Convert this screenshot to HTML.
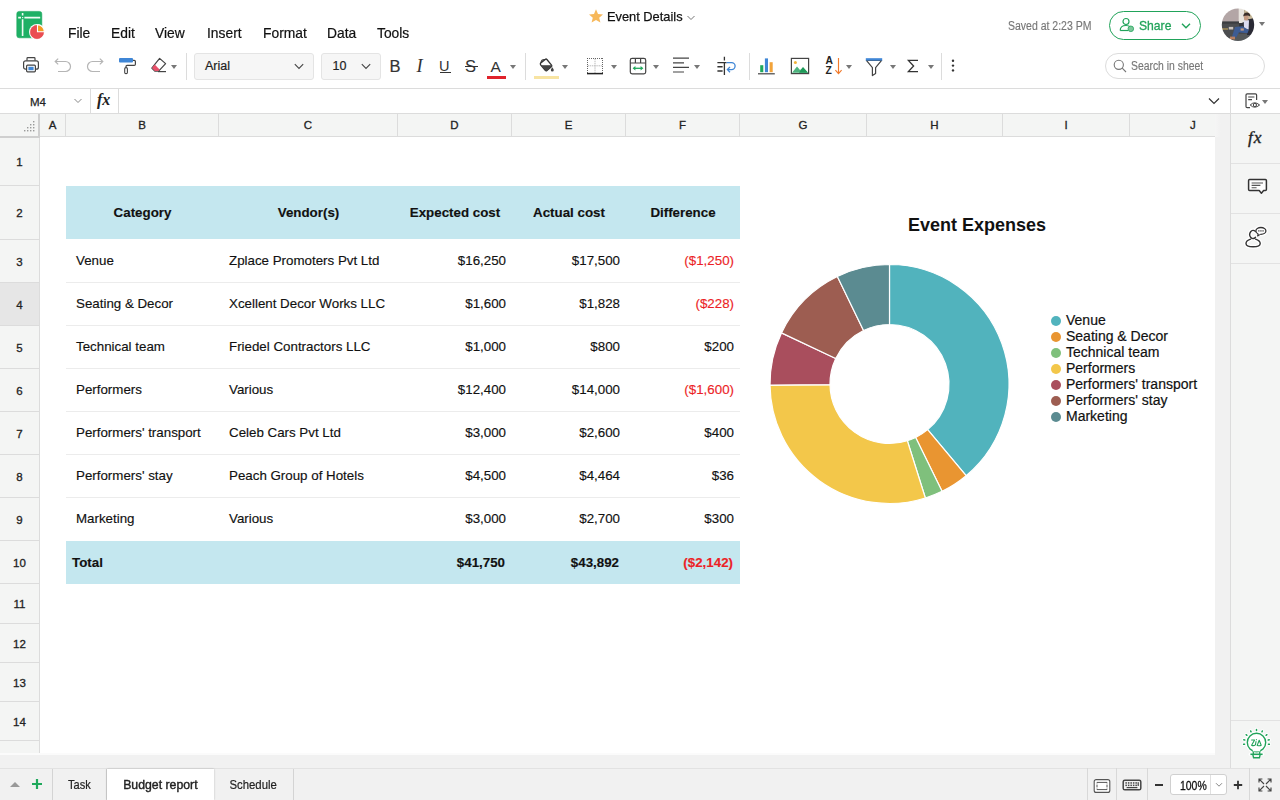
<!DOCTYPE html>
<html><head><meta charset="utf-8"><title>Event Details</title>
<style>
*{box-sizing:border-box;margin:0;padding:0}
html,body{width:1280px;height:800px;overflow:hidden;background:#fff}
body{font-family:"Liberation Sans",sans-serif;color:#222;position:relative;font-size:13px}
.abs{position:absolute}
.menu span{position:absolute;top:24px;font-size:14.2px;color:#111;line-height:18px;white-space:nowrap;transform-origin:0 50%;transform:scaleX(.975);-webkit-text-stroke:0.2px #111}
.ui{font-family:"Liberation Sans",sans-serif}
.sep{position:absolute;width:1px;background:#dcdcdc;top:53px;height:27px}
.box{position:absolute;top:53px;height:27px;background:#f6f6f6;border:1px solid #e4e4e4;border-radius:3px}
.tb{position:absolute;font-size:16px;line-height:20px;color:#333;top:56px}
.arr{position:absolute;width:0;height:0;border-left:3.5px solid transparent;border-right:3.5px solid transparent;border-top:4px solid #777;top:65px}
.colh{position:absolute;top:114px;height:23px;background:#f4f5f4;border-right:1px solid #dcdcdc;border-bottom:1px solid #dcdcdc;font-size:11.5px;font-weight:normal;-webkit-text-stroke:0.3px #222;color:#222;text-align:center;line-height:22px}
.rowh{position:absolute;left:0;width:40px;background:#f4f5f4;border-right:1px solid #dcdcdc;border-bottom:1px solid #dcdcdc;font-size:11.5px;font-weight:normal;-webkit-text-stroke:0.3px #222;color:#222;text-align:center}
.cell{position:absolute;font-size:13.33px;line-height:16px;color:#111;white-space:nowrap;-webkit-text-stroke:0.15px}
.r{text-align:right}
.red{color:#ec1f27}
.b{font-weight:bold}
.hl{position:absolute;left:66px;width:674px;height:1px;background:#ececec}
.leg{position:absolute;left:1066px;font-size:14px;line-height:16px;color:#111;white-space:nowrap;-webkit-text-stroke:0.2px #111}
.dot{position:absolute;left:1051px;width:10px;height:10px;border-radius:50%}
.tab{position:absolute;top:769px;height:31px;font-size:13px;line-height:32px;color:#222;text-align:center;border-right:1px solid #d4d4d4;-webkit-text-stroke:0.2px #222}.tab span{display:inline-block}
</style></head><body>

<!-- ===== TOP BAR ===== -->
<div id="top" class="abs" style="left:0;top:0;width:1280px;height:89px;background:#fff;border-bottom:1px solid #dcdcdc"></div>

<!-- logo -->
<svg class="abs" style="left:14px;top:8px" width="34" height="34" viewBox="0 0 34 34">
  <rect x="2.8" y="3.4" width="25" height="26.4" rx="2.4" fill="#1fb065" stroke="#17a55b" stroke-width="0.6"/>
  <path d="M8.6 5 V7.6 M8.6 11.2 V28" stroke="#f2fbf5" stroke-width="1.6"/>
  <path d="M4.2 9.6 H7 M10.4 9.6 H26.2" stroke="#f2fbf5" stroke-width="1.6"/>
  <rect x="8" y="9" width="1.2" height="1.2" fill="#d8f2e3"/>
  <circle cx="23" cy="24" r="8" fill="#fff"/>
  <circle cx="23" cy="24" r="6.7" fill="#ea4d52" stroke="#e23a40" stroke-width="0.5"/>
  <path d="M23.5 23.7 V16.8 A6.9 6.9 0 0 1 30.4 23.7 Z" fill="#f39c22" stroke="#fff" stroke-width="1.1"/>
</svg>

<div class="menu">
<span style="left:68px">File</span><span style="left:110.7px">Edit</span><span style="left:155px">View</span><span style="left:207px">Insert</span><span style="left:263px">Format</span><span style="left:327px">Data</span><span style="left:377px">Tools</span>
</div>

<!-- title -->
<svg class="abs" style="left:588px;top:8px" width="16" height="16" viewBox="0 0 16 16"><path d="M8 1.2 L10 5.9 L15 6.4 L11.2 9.7 L12.4 14.6 L8 12 L3.6 14.6 L4.8 9.7 L1 6.4 L6 5.9 Z" fill="#f7b85a"/></svg>
<div class="abs" style="left:607px;top:7.8px;font-size:13.5px;line-height:18px;color:#111;white-space:nowrap;transform-origin:0 50%;transform:scaleX(.95);-webkit-text-stroke:0.25px #111">Event Details</div>
<svg class="abs" style="left:685.5px;top:12.5px" width="10" height="10" viewBox="0 0 10 10"><path d="M1.5 3 L5 6.5 L8.5 3" fill="none" stroke="#777" stroke-width="1"/></svg>

<div class="abs" style="left:1008px;top:17.8px;font-size:12px;line-height:16px;color:#777;white-space:nowrap;transform-origin:0 50%;transform:scaleX(.875);-webkit-text-stroke:0.15px #777">Saved at 2:23 PM</div>

<!-- share -->
<div class="abs" style="left:1109px;top:11px;width:92px;height:28.5px;border:1.5px solid #21a35a;border-radius:15px;background:#fff"></div>
<svg class="abs" style="left:1118px;top:16px" width="20" height="18" viewBox="0 0 20 18"><circle cx="8" cy="5.5" r="3" fill="none" stroke="#21a35a" stroke-width="1.2"/><path d="M2.2 14.5 C2.2 10.5 5 9.5 8 9.5 C10 9.5 11.5 10 12.5 11" fill="none" stroke="#21a35a" stroke-width="1.2"/><path d="M2.2 14.5 H10" stroke="#21a35a" stroke-width="1.2"/><circle cx="12.8" cy="12.8" r="2.8" fill="#7cc79a" stroke="#21a35a" stroke-width="0.8"/></svg>
<div class="abs" style="left:1139px;top:17px;font-size:13.5px;line-height:18px;color:#21a35a;white-space:nowrap;transform-origin:0 50%;transform:scaleX(.9);-webkit-text-stroke:0.3px #21a35a">Share</div>
<svg class="abs" style="left:1180px;top:20.5px" width="12" height="10" viewBox="0 0 12 10"><path d="M2 2.8 L6 6.8 L10 2.8" fill="none" stroke="#21a35a" stroke-width="1.4"/></svg>

<!-- avatar -->
<svg class="abs" style="left:1221px;top:8px" width="34" height="34" viewBox="0 0 34 34">
 <defs><clipPath id="av"><circle cx="17" cy="16.7" r="16.2"/></clipPath><filter id="avb" x="-10%" y="-10%" width="120%" height="120%"><feGaussianBlur stdDeviation="0.55"/></filter></defs>
 <g clip-path="url(#av)"><g filter="url(#avb)">
  <rect x="-2" y="-2" width="38" height="38" fill="#3e3d3d"/>
  <rect x="-2" y="-2" width="20" height="16" fill="#b3a6a6"/>
  <rect x="17.7" y="-2" width="5.6" height="17" fill="#e8e4de"/>
  <rect x="23.2" y="-2" width="12" height="16" fill="#c9bb9c"/>
  <rect x="-2" y="13.6" width="20" height="17" fill="#4b4e50"/>
  <rect x="-2" y="13.6" width="20" height="2" fill="#3a3d3f"/>
  <rect x="12" y="25.5" width="20" height="8" fill="#55585a"/>
  <rect x="1" y="20.4" width="6" height="1.2" fill="#b89a5a"/>
  <rect x="7.8" y="18.9" width="4.4" height="2.6" fill="#c8c2bd"/>
  <path d="M26.5 11.4 L33.5 10 L34 27 L26 27 Z" fill="#2a2c35"/>
  <path d="M18.4 16 L24 13.6 L25 21 L19 22.4Z" fill="#30323a"/>
  <path d="M22.8 12.3 L28 12.3 L27.6 21.6 L23 21.6Z" fill="#dcdcf0"/>
  <path d="M14 18.9 L21.5 18.3 L27.8 22 L26.5 25.2 L17.8 24.5 L15.2 29.5 L10.9 28.9Z" fill="#3d5b93"/>
  <rect x="19.6" y="20.4" width="3.2" height="2.2" fill="#c49a82"/>
  <rect x="9" y="28.6" width="5" height="2.8" fill="#b98060"/>
  <ellipse cx="25.2" cy="9.6" rx="2.3" ry="2.8" fill="#c49a82"/>
  <path d="M22.2 8.6 Q22.4 4.6 26 4.6 Q29.4 4.8 29.2 8.4 L27 7.6 L23.6 7.8Z" fill="#3b2f2a"/>
 </g></g>
</svg>
<div class="arr" style="left:1259.3px;top:22px;border-left-width:3.8px;border-right-width:3.8px"></div>

<!-- ===== TOOLBAR ===== -->
<!-- print -->
<svg class="abs" style="left:22px;top:56px" width="18" height="18" viewBox="0 0 18 18">
 <path d="M5 4.8 V2.4 Q5 1.6 5.8 1.6 H12.2 Q13 1.6 13 2.4 V4.8" fill="none" stroke="#444" stroke-width="1.2"/>
 <rect x="1.6" y="4.8" width="14.8" height="8.4" rx="2" fill="#fff" stroke="#444" stroke-width="1.2"/>
 <rect x="4.6" y="9.2" width="8.8" height="6.6" rx="1" fill="#fff" stroke="#444" stroke-width="1.2"/>
 <rect x="6.4" y="10.8" width="5.2" height="3.4" fill="#3f86d6"/>
</svg>
<!-- undo -->
<svg class="abs" style="left:53px;top:57px" width="20" height="16" viewBox="0 0 20 16"><path d="M2.2 4.5 H12.5 A5 5 0 0 1 12.5 14.5 H5" fill="none" stroke="#b5b5b5" stroke-width="1.2"/><path d="M5.2 1.6 L2.2 4.5 L5.2 7.4" fill="none" stroke="#b5b5b5" stroke-width="1.2"/></svg>
<!-- redo -->
<svg class="abs" style="left:85px;top:57px" width="20" height="16" viewBox="0 0 20 16"><path d="M17.8 4.5 H7.5 A5 5 0 0 0 7.5 14.5 H15" fill="none" stroke="#b5b5b5" stroke-width="1.2"/><path d="M14.8 1.6 L17.8 4.5 L14.8 7.4" fill="none" stroke="#b5b5b5" stroke-width="1.2"/></svg>
<!-- roller -->
<svg class="abs" style="left:118px;top:57px" width="19" height="18" viewBox="0 0 19 18">
 <rect x="1" y="1" width="14" height="4.6" rx="1" fill="#3f86d6"/>
 <path d="M15 3.3 H16.2 Q17.4 3.3 17.4 4.5 V7.2 Q17.4 8.4 16.2 8.4 H9 Q8 8.4 8 9.4 V10.6" fill="none" stroke="#444" stroke-width="1.2"/>
 <rect x="6.7" y="10.6" width="2.7" height="6" rx="1.2" fill="#fff" stroke="#444" stroke-width="1.1"/>
</svg>
<!-- eraser -->
<svg class="abs" style="left:150px;top:57px" width="18" height="16" viewBox="0 0 18 16">
 <path d="M9.6 1.4 L15.6 6.6 L8.6 14.2 H4.8 L1.8 11.2 Z" fill="#fff" stroke="#444" stroke-width="1.2" stroke-linejoin="round"/>
 <path d="M4.7 7.4 L9.6 12.4 L8.3 14 H4.9 L2 11 Z" fill="#e8506a"/>
 <path d="M8 14.6 H16" stroke="#444" stroke-width="1.2"/>
</svg>
<div class="arr" style="left:171px"></div>
<div class="sep" style="left:186px"></div>

<div class="box" style="left:194px;width:120px"></div>
<div class="abs" style="left:205px;top:58px;font-size:12.5px;line-height:16px;color:#222;-webkit-text-stroke:0.2px #222">Arial</div>
<svg class="abs" style="left:293px;top:61px" width="12" height="10" viewBox="0 0 12 10"><path d="M1.8 3.2 L6 7.4 L10.2 3.2" fill="none" stroke="#444" stroke-width="1.1"/></svg>
<div class="box" style="left:321px;width:60px"></div>
<div class="abs" style="left:332.5px;top:58px;font-size:12.5px;line-height:16px;color:#222;-webkit-text-stroke:0.2px #222">10</div>
<svg class="abs" style="left:360px;top:61px" width="12" height="10" viewBox="0 0 12 10"><path d="M1.8 3.2 L6 7.4 L10.2 3.2" fill="none" stroke="#444" stroke-width="1.1"/></svg>

<div class="tb" style="left:389.5px;font-size:16.5px;-webkit-text-stroke:0.2px #333">B</div>
<div class="tb" style="left:416.5px;top:55.5px;font-family:'Liberation Serif',serif;font-style:italic;font-size:18.5px">I</div>
<div class="tb" style="left:439px;font-size:14.5px;top:55.5px">U</div>
<div class="abs" style="left:439.5px;top:72px;width:11px;height:1.2px;background:#333"></div>
<div class="tb" style="left:465px;font-size:16.5px;top:55.5px">S</div>
<div class="abs" style="left:464.5px;top:66px;width:13px;height:1.1px;background:#333"></div>
<div class="tb" style="left:490.5px;font-size:15.5px;top:56.5px">A</div>
<div class="abs" style="left:487px;top:75.5px;width:19px;height:3.2px;background:#e0222b"></div>
<div class="arr" style="left:509.5px"></div>
<div class="sep" style="left:525px"></div>

<!-- bucket -->
<svg class="abs" style="left:538px;top:57px" width="18" height="17" viewBox="0 0 18 17">
 <defs><clipPath id="bk"><rect x="4" y="3.2" width="8.2" height="9.6" rx="1.2" transform="rotate(-40 8 8)"/></clipPath></defs>
 <path d="M5.2 3.4 Q8 0.2 11 3.4" transform="rotate(-40 8 8)" fill="none" stroke="#333" stroke-width="1.1"/>
 <rect x="4" y="3.2" width="8.2" height="9.6" rx="1.2" transform="rotate(-40 8 8)" fill="#fff" stroke="#333" stroke-width="1.3"/>
 <rect x="0" y="8.2" width="18" height="10" fill="#444" clip-path="url(#bk)"/>
 <path d="M14.3 10.2 Q15.8 12.2 15.8 13.1 A1.5 1.5 0 0 1 12.8 13.1 Q12.8 12.2 14.3 10.2Z" fill="#444"/>
</svg>
<div class="abs" style="left:534px;top:75.5px;width:25px;height:3.2px;background:#f8e4a2"></div>
<div class="arr" style="left:561.5px"></div>

<!-- borders -->
<svg class="abs" style="left:586px;top:57px" width="18" height="18" viewBox="0 0 18 18">
 <path d="M9 1.5 V16 M1.5 8.8 H16.5" stroke="#bbb" stroke-width="1" stroke-dasharray="1.5 0.7"/>
 <path d="M1.5 1 V16.5 M16.5 1 V16.5 M1 1.5 H17" fill="none" stroke="#555" stroke-width="0.9" stroke-dasharray="1 1"/>
 <path d="M1 16.6 H17" stroke="#222" stroke-width="1.5"/>
</svg>
<div class="arr" style="left:610.5px"></div>

<!-- merge -->
<svg class="abs" style="left:629px;top:57px" width="18" height="18" viewBox="0 0 18 18">
 <rect x="1.3" y="1.4" width="15.4" height="15.4" rx="1.8" fill="#fff" stroke="#444" stroke-width="1.2"/>
 <path d="M1.3 6 H16.7 M6.4 1.4 V6 M11.6 1.4 V6" stroke="#444" stroke-width="1.2"/>
 <path d="M5.6 11.3 H12.4" stroke="#1fa95c" stroke-width="1.3"/>
 <path d="M3.6 11.3 L6.4 9.1 V13.5Z M14.4 11.3 L11.6 9.1 V13.5Z" fill="#1fa95c"/>
</svg>
<div class="arr" style="left:653px"></div>

<!-- align -->
<svg class="abs" style="left:672px;top:57px" width="18" height="16" viewBox="0 0 18 16"><path d="M1 1.2 H17 M1 5.8 H12 M1 10.4 H17 M1 15 H12" stroke="#444" stroke-width="1.2"/></svg>
<div class="arr" style="left:693.5px"></div>

<!-- wrap -->
<svg class="abs" style="left:716px;top:56px" width="21" height="20" viewBox="0 0 21 20">
 <path d="M8.4 0.8 V4.4 M8.4 6.2 V19" stroke="#333" stroke-width="1.3"/>
 <path d="M1.4 6.6 H10.6 M1.4 10.8 H6.6 M1.4 15 H6.6" stroke="#333" stroke-width="1.4"/>
 <path d="M10.6 6.6 H15.6 A3.5 3.5 0 0 1 15.6 13.6 H11.6 M14 11 L11.4 13.6 L14 16.2" fill="none" stroke="#3f86d6" stroke-width="1.3"/>
</svg>
<div class="sep" style="left:749px"></div>

<!-- chart -->
<svg class="abs" style="left:757px;top:57px" width="19" height="18" viewBox="0 0 19 18">
 <rect x="3.2" y="8.2" width="3.1" height="7" fill="#1fa95c"/><rect x="7.9" y="1.4" width="3.1" height="13.8" fill="#3f86d6"/><rect x="12.6" y="5.2" width="3.1" height="10" fill="#f2a33a"/>
 <path d="M1 16.8 H17.8" stroke="#444" stroke-width="1.2"/>
</svg>
<!-- image -->
<svg class="abs" style="left:790px;top:57px" width="20" height="18" viewBox="0 0 20 18">
 <rect x="1.4" y="1.4" width="17.2" height="15.2" fill="#fff" stroke="#444" stroke-width="1.2"/>
 <path d="M2 15.8 L7 9.6 L10 13 L13 10.6 L18 15.8 Z" fill="#4db37e"/>
 <path d="M9 15.8 L13 10 L18 15.8Z" fill="#1f9a58"/>
 <circle cx="5.4" cy="5.6" r="1.5" fill="#f2b43a"/>
</svg>
<!-- sort -->
<div class="abs" style="left:825.5px;top:56.3px;font-size:10.3px;line-height:9.6px;font-weight:bold;color:#222">A<br>Z</div>
<svg class="abs" style="left:833px;top:57px" width="12" height="18" viewBox="0 0 12 18"><path d="M5.5 1 V16.4 M2.4 13.2 L5.5 16.6 L8.6 13.2" fill="none" stroke="#f07b2e" stroke-width="1.15"/></svg>
<div class="arr" style="left:846px"></div>
<!-- filter -->
<svg class="abs" style="left:865px;top:56.8px" width="18" height="20" viewBox="0 0 18 20">
 <path d="M1.4 3.4 H16.6 L10.6 10.6 V16.4 L7.4 18.6 V10.6 Z" fill="#fff" stroke="#444" stroke-width="1.2" stroke-linejoin="round"/>
 <rect x="0.8" y="1.2" width="16.4" height="2.4" fill="#3f86d6"/>
</svg>
<div class="arr" style="left:890px"></div>
<!-- sigma -->
<svg class="abs" style="left:906px;top:58px" width="14" height="16" viewBox="0 0 14 16"><path d="M12 2.4 H2.4 L7.6 8 L2.4 13.6 H12" fill="none" stroke="#333" stroke-width="1.3"/></svg>
<div class="arr" style="left:928px"></div>
<div class="sep" style="left:940.8px"></div>
<svg class="abs" style="left:950px;top:58px" width="6" height="16" viewBox="0 0 6 16"><circle cx="3" cy="2.8" r="1.2" fill="#333"/><circle cx="3" cy="7.6" r="1.2" fill="#333"/><circle cx="3" cy="12.4" r="1.2" fill="#333"/></svg>

<!-- search -->
<div class="abs" style="left:1105px;top:53px;width:160px;height:26px;border:1px solid #dcdcdc;border-radius:13px;background:#fff"></div>
<svg class="abs" style="left:1112px;top:58px" width="16" height="16" viewBox="0 0 16 16"><circle cx="6.8" cy="6.8" r="4.6" fill="none" stroke="#777" stroke-width="1.1"/><path d="M10.2 10.2 L14 14" stroke="#777" stroke-width="1.1"/></svg>
<div class="abs" style="left:1131px;top:58px;font-size:12px;line-height:16px;color:#777;white-space:nowrap;transform-origin:0 50%;transform:scaleX(.865);-webkit-text-stroke:0.15px #777">Search in sheet</div>

<!-- ===== FORMULA BAR ===== -->
<div class="abs" style="left:0;top:89px;width:1230px;height:25px;background:#fff;border-bottom:1px solid #dcdcdc"></div>
<div class="abs" style="left:30px;top:94px;font-size:11.5px;line-height:16px;color:#222;-webkit-text-stroke:0.25px #222">M4</div>
<svg class="abs" style="left:73px;top:97px" width="10" height="8" viewBox="0 0 10 8"><path d="M1.5 2 L5 5.5 L8.5 2" fill="none" stroke="#888" stroke-width="1"/></svg>
<div class="abs" style="left:90px;top:89px;width:1px;height:24px;background:#dcdcdc"></div>
<div class="abs" style="left:97px;top:91px;font-family:'Liberation Serif',serif;font-style:italic;font-weight:bold;font-size:16px;line-height:18px;color:#222;letter-spacing:0px">fx</div>
<div class="abs" style="left:118px;top:89px;width:1px;height:24px;background:#dcdcdc"></div>
<svg class="abs" style="left:1207px;top:96px" width="14" height="10" viewBox="0 0 14 10"><path d="M2 2.5 L7 7.5 L12 2.5" fill="none" stroke="#333" stroke-width="1.2"/></svg>

<!-- ===== RIGHT PANEL ===== -->
<div class="abs" style="left:1230px;top:89px;width:50px;height:679px;background:#f4f5f4;border-left:1px solid #dcdcdc"></div>
<div class="abs" style="left:1231px;top:89px;width:49px;height:24px;background:#fff"></div>
<div class="abs" style="left:1231px;top:113px;width:49px;height:1px;background:#dcdcdc"></div>
<div class="abs" style="left:1231px;top:163px;width:49px;height:1px;background:#e2e2e2"></div>
<div class="abs" style="left:1231px;top:213px;width:49px;height:1px;background:#e2e2e2"></div>
<div class="abs" style="left:1231px;top:263px;width:49px;height:1px;background:#e2e2e2"></div>
<div class="abs" style="left:1231px;top:720px;width:49px;height:1px;background:#e2e2e2"></div>
<!-- view icon -->
<svg class="abs" style="left:1244px;top:92px" width="18" height="18" viewBox="0 0 18 18">
 <path d="M12.6 8 V3 Q12.6 1.8 11.4 1.8 H3.2 Q2 1.8 2 3 V14.4 Q2 15.6 3.2 15.6 H6" fill="none" stroke="#444" stroke-width="1.2"/>
 <path d="M4.2 5 H10.4 M4.2 7.6 H8" stroke="#444" stroke-width="1.1"/>
 <path d="M6.2 13 Q10.6 8.6 15.6 13 Q10.6 17.4 6.2 13Z" fill="#fff" stroke="#444" stroke-width="1"/>
 <circle cx="10.9" cy="13" r="1.6" fill="none" stroke="#444" stroke-width="1"/>
</svg>
<div class="arr" style="left:1262px;top:100px;border-top-color:#777"></div>
<div class="abs" style="left:1248px;top:126.5px;font-family:'Liberation Serif',serif;font-style:italic;font-size:17.5px;line-height:20px;color:#222;letter-spacing:0.8px;-webkit-text-stroke:0.35px #222">fx</div>
<!-- comment -->
<svg class="abs" style="left:1246.5px;top:177.3px" width="22" height="20" viewBox="0 0 22 20">
 <path d="M2.6 2.4 H18.4 Q19.4 2.4 19.4 3.4 V12.6 Q19.4 13.6 18.4 13.6 H16.6 L14.4 16.2 L12.2 13.6 H2.6 Q1.6 13.6 1.6 12.6 V3.4 Q1.6 2.4 2.6 2.4Z" fill="#fff" stroke="#333" stroke-width="1.5" stroke-linejoin="round"/>
 <path d="M4.6 6 H16 M4.6 8.4 H13.4 M4.6 10.8 H9.6" stroke="#555" stroke-width="1.1"/>
</svg>
<!-- user chat -->
<svg class="abs" style="left:1243px;top:224px" width="26" height="26" viewBox="0 0 26 26">
 <g fill="none" stroke="#fff" stroke-width="4" stroke-linecap="round"><path d="M12.3 7.4 A3.3 4.1 0 1 0 12.5 13.3"/><path d="M7.6 15.2 Q3 16.6 3 19.5 Q3 22.8 10.1 22.8 Q17.2 22.8 17.2 19.5 Q17.2 16.8 12.6 15.2"/><ellipse cx="17.9" cy="6.9" rx="5" ry="3.4"/></g>
 <g fill="none" stroke="#333" stroke-width="1.4" stroke-linecap="round"><path d="M12.3 7.4 A3.3 4.1 0 1 0 12.5 13.3"/><path d="M7.6 15.2 Q3 16.6 3 19.5 Q3 22.8 10.1 22.8 Q17.2 22.8 17.2 19.5 Q17.2 16.8 12.6 15.2"/></g>
 <path d="M15.2 9.6 L14.6 12 L17.6 10.1" fill="#fff" stroke="#333" stroke-width="1.1" stroke-linejoin="round"/>
 <ellipse cx="17.9" cy="6.9" rx="5" ry="3.4" fill="#fff" stroke="#333" stroke-width="1.3"/>
 <path d="M15.5 9.3 L17.4 9.8" stroke="#fff" stroke-width="1.4"/>
 <rect x="15.2" y="6.3" width="1.3" height="1.2" fill="#333"/><rect x="17.3" y="6.3" width="1.3" height="1.2" fill="#333"/><rect x="19.4" y="6.3" width="1.3" height="1.2" fill="#333"/>
</svg>
<!-- zia bulb -->
<svg class="abs" style="left:1241px;top:727px" width="32" height="34" viewBox="0 0 32 34">
 <g fill="none" stroke="#fff" stroke-width="3.4" stroke-linecap="round"><circle cx="15.5" cy="15.5" r="9.2"/><path d="M15.50 3.50 L15.50 2.50 M20.95 4.81 L21.40 3.92 M10.05 4.81 L9.60 3.92 M25.08 8.28 L25.88 7.68 M5.92 8.28 L5.12 7.68 M27.24 13.01 L28.22 12.80 M3.76 13.01 L2.78 12.80 M27.38 17.17 L28.37 17.31 M3.62 17.17 L2.63 17.31"/><path d="M9.4 27.3 H21.6"/></g>
 <path d="M12.3 24.2 V27.3 M18.7 24.2 V27.3" stroke="#21a35a" stroke-width="1.3"/>
 <circle cx="15.5" cy="15.5" r="9.2" fill="#fff" stroke="#21a35a" stroke-width="1.4"/>
 <path d="M11.8 23.4 H19.2" stroke="#fff" stroke-width="2"/>
 <path d="M9.4 27.3 H21.6" stroke="#21a35a" stroke-width="1.6"/>
 <path d="M11.8 27.3 L12.6 30.8 H18.4 L19.2 27.3" fill="none" stroke="#21a35a" stroke-width="1.4" stroke-linejoin="round"/>
 <path d="M15.50 3.50 L15.50 2.50 M20.95 4.81 L21.40 3.92 M10.05 4.81 L9.60 3.92 M25.08 8.28 L25.88 7.68 M5.92 8.28 L5.12 7.68 M27.24 13.01 L28.22 12.80 M3.76 13.01 L2.78 12.80 M27.38 17.17 L28.37 17.31 M3.62 17.17 L2.63 17.31" stroke="#21a35a" stroke-width="1.5" stroke-linecap="round"/>
 <path d="M10.6 13 H13.6 L10.6 18.2 Q12.6 19.4 14.6 17.6 M15 14.6 L14.4 18 M15.4 12.6 V12.8 M16.2 18.4 L18.2 13.2 L20.2 18.2 Q18.6 19.2 16.4 18.4" fill="none" stroke="#21a35a" stroke-width="1.1" stroke-linecap="round" stroke-linejoin="round"/>
</svg>

<!-- ===== COLUMN HEADERS ===== -->
<div class="abs" style="left:0;top:114px;width:1230px;height:23px;background:#f4f5f4;border-bottom:1px solid #dcdcdc"></div>
<div class="colh" style="left:0;width:40px;border-right:2px solid #cfcfcf;border-bottom:2px solid #cfcfcf;height:24px"></div>
<svg class="abs" style="left:22px;top:120px" width="14" height="12" viewBox="0 0 14 12"><g fill="#9a9a9a"><rect x="11" y="1" width="1.4" height="1.4"/><rect x="11" y="4" width="1.4" height="1.4"/><rect x="8" y="4" width="1.4" height="1.4"/><rect x="11" y="7" width="1.4" height="1.4"/><rect x="8" y="7" width="1.4" height="1.4"/><rect x="5" y="7" width="1.4" height="1.4"/><rect x="11" y="10" width="1.4" height="1.4"/><rect x="8" y="10" width="1.4" height="1.4"/><rect x="5" y="10" width="1.4" height="1.4"/><rect x="2" y="10" width="1.4" height="1.4"/></g></svg>
<div class="colh" style="left:40px;width:26px">A</div>
<div class="colh" style="left:66px;width:153px">B</div>
<div class="colh" style="left:219px;width:179px">C</div>
<div class="colh" style="left:398px;width:114px">D</div>
<div class="colh" style="left:512px;width:114px">E</div>
<div class="colh" style="left:626px;width:114px">F</div>
<div class="colh" style="left:740px;width:127px">G</div>
<div class="colh" style="left:867px;width:136px">H</div>
<div class="colh" style="left:1003px;width:127px">I</div>
<div class="colh" style="left:1130px;width:100px;border-right:none;text-align:left;padding-left:60px">J</div>

<!-- ===== ROW HEADERS ===== -->
<div class="rowh" style="top:138px;height:48px;line-height:49px">1</div>
<div class="rowh" style="top:186px;height:54px;line-height:55px">2</div>
<div class="rowh" style="top:240px;height:43px;line-height:44px">3</div>
<div class="rowh" style="top:283px;height:43px;line-height:44px;background:#e6e6e6">4</div>
<div class="rowh" style="top:326px;height:43px;line-height:44px">5</div>
<div class="rowh" style="top:369px;height:43px;line-height:44px">6</div>
<div class="rowh" style="top:412px;height:43px;line-height:44px">7</div>
<div class="rowh" style="top:455px;height:43px;line-height:44px">8</div>
<div class="rowh" style="top:498px;height:43px;line-height:44px">9</div>
<div class="rowh" style="top:541px;height:43px;line-height:44px">10</div>
<div class="rowh" style="top:584px;height:40px;line-height:41px">11</div>
<div class="rowh" style="top:624px;height:39px;line-height:40px">12</div>
<div class="rowh" style="top:663px;height:39px;line-height:40px">13</div>
<div class="rowh" style="top:702px;height:39px;line-height:40px">14</div>
<div class="rowh" style="top:741px;height:12px;border-bottom:none"></div>

<!-- scrollbars -->
<div class="abs" style="left:1215px;top:114px;width:15px;height:23px;background:linear-gradient(90deg,#f5f5f5,#f1f1f1 40%)"></div>
<div class="abs" style="left:1215px;top:137px;width:15px;height:631px;background:#f1f1f1"></div>
<div class="abs" style="left:0;top:753px;width:1230px;height:15px;background:#f1f1f1"></div><div class="abs" style="left:0;top:753px;width:1215px;height:2px;background:#fbfbfb"></div>

<!-- ===== TABLE ===== -->
<div class="abs" style="left:66px;top:186px;width:674px;height:53px;background:#c4e7ef"></div>
<div class="abs" style="left:66px;top:541px;width:674px;height:43px;background:#c4e7ef"></div>
<div class="cell b" style="left:66px;width:153px;top:204.6px;text-align:center">Category</div>
<div class="cell b" style="left:219px;width:179px;top:204.6px;text-align:center">Vendor(s)</div>
<div class="cell b" style="left:398px;width:114px;top:204.6px;text-align:center">Expected cost</div>
<div class="cell b" style="left:512px;width:114px;top:204.6px;text-align:center">Actual cost</div>
<div class="cell b" style="left:626px;width:114px;top:204.6px;text-align:center">Difference</div>
<div class="cell" style="left:76px;top:252.5px">Venue</div>
<div class="cell" style="left:229px;top:252.5px">Zplace Promoters Pvt Ltd</div>
<div class="cell r" style="left:398px;width:108px;top:252.5px">$16,250</div>
<div class="cell r" style="left:512px;width:108px;top:252.5px">$17,500</div>
<div class="cell r red" style="left:626px;width:108px;top:252.5px">($1,250)</div>
<div class="hl" style="top:282px"></div>
<div class="cell" style="left:76px;top:295.5px">Seating & Decor</div>
<div class="cell" style="left:229px;top:295.5px">Xcellent Decor Works LLC</div>
<div class="cell r" style="left:398px;width:108px;top:295.5px">$1,600</div>
<div class="cell r" style="left:512px;width:108px;top:295.5px">$1,828</div>
<div class="cell r red" style="left:626px;width:108px;top:295.5px">($228)</div>
<div class="hl" style="top:325px"></div>
<div class="cell" style="left:76px;top:338.5px">Technical team</div>
<div class="cell" style="left:229px;top:338.5px">Friedel Contractors LLC</div>
<div class="cell r" style="left:398px;width:108px;top:338.5px">$1,000</div>
<div class="cell r" style="left:512px;width:108px;top:338.5px">$800</div>
<div class="cell r" style="left:626px;width:108px;top:338.5px">$200</div>
<div class="hl" style="top:368px"></div>
<div class="cell" style="left:76px;top:381.5px">Performers</div>
<div class="cell" style="left:229px;top:381.5px">Various</div>
<div class="cell r" style="left:398px;width:108px;top:381.5px">$12,400</div>
<div class="cell r" style="left:512px;width:108px;top:381.5px">$14,000</div>
<div class="cell r red" style="left:626px;width:108px;top:381.5px">($1,600)</div>
<div class="hl" style="top:411px"></div>
<div class="cell" style="left:76px;top:424.5px">Performers' transport</div>
<div class="cell" style="left:229px;top:424.5px">Celeb Cars Pvt Ltd</div>
<div class="cell r" style="left:398px;width:108px;top:424.5px">$3,000</div>
<div class="cell r" style="left:512px;width:108px;top:424.5px">$2,600</div>
<div class="cell r" style="left:626px;width:108px;top:424.5px">$400</div>
<div class="hl" style="top:454px"></div>
<div class="cell" style="left:76px;top:467.5px">Performers' stay</div>
<div class="cell" style="left:229px;top:467.5px">Peach Group of Hotels</div>
<div class="cell r" style="left:398px;width:108px;top:467.5px">$4,500</div>
<div class="cell r" style="left:512px;width:108px;top:467.5px">$4,464</div>
<div class="cell r" style="left:626px;width:108px;top:467.5px">$36</div>
<div class="hl" style="top:497px"></div>
<div class="cell" style="left:76px;top:510.5px">Marketing</div>
<div class="cell" style="left:229px;top:510.5px">Various</div>
<div class="cell r" style="left:398px;width:108px;top:510.5px">$3,000</div>
<div class="cell r" style="left:512px;width:108px;top:510.5px">$2,700</div>
<div class="cell r" style="left:626px;width:108px;top:510.5px">$300</div>
<div class="cell b" style="left:72px;top:554.8px">Total</div>
<div class="cell b r" style="left:398px;width:107px;top:554.8px">$41,750</div>
<div class="cell b r" style="left:512px;width:107px;top:554.8px">$43,892</div>
<div class="cell b r red" style="left:626px;width:107px;top:554.8px">($2,142)</div>

<!-- ===== CHART ===== -->
<div class="abs" style="left:877px;top:213.7px;width:200px;text-align:center;font-size:18px;font-weight:bold;line-height:22px;color:#111">Event Expenses</div>
<svg class="abs" style="left:760px;top:255px" width="260" height="260" viewBox="760 255 260 260"><path d="M889.50 264.50 A119.5 119.5 0 0 1 966.12 475.70 L927.65 429.66 A59.5 59.5 0 0 0 889.50 324.50Z" fill="#51b3bd" stroke="#fff" stroke-width="1.2" stroke-linejoin="round"/><path d="M966.12 475.70 A119.5 119.5 0 0 1 942.04 491.33 L915.66 437.44 A59.5 59.5 0 0 0 927.65 429.66Z" fill="#e99531" stroke="#fff" stroke-width="1.2" stroke-linejoin="round"/><path d="M942.04 491.33 A119.5 119.5 0 0 1 925.36 497.99 L907.35 440.76 A59.5 59.5 0 0 0 915.66 437.44Z" fill="#7fc07c" stroke="#fff" stroke-width="1.2" stroke-linejoin="round"/><path d="M925.36 497.99 A119.5 119.5 0 0 1 770.01 385.12 L830.00 384.56 A59.5 59.5 0 0 0 907.35 440.76Z" fill="#f3c74a" stroke="#fff" stroke-width="1.2" stroke-linejoin="round"/><path d="M770.01 385.12 A119.5 119.5 0 0 1 781.49 332.88 L835.72 358.54 A59.5 59.5 0 0 0 830.00 384.56Z" fill="#a94e5d" stroke="#fff" stroke-width="1.2" stroke-linejoin="round"/><path d="M781.49 332.88 A119.5 119.5 0 0 1 837.36 276.47 L863.54 330.46 A59.5 59.5 0 0 0 835.72 358.54Z" fill="#9d5d51" stroke="#fff" stroke-width="1.2" stroke-linejoin="round"/><path d="M837.36 276.47 A119.5 119.5 0 0 1 889.50 264.50 L889.50 324.50 A59.5 59.5 0 0 0 863.54 330.46Z" fill="#5b8b91" stroke="#fff" stroke-width="1.2" stroke-linejoin="round"/></svg>
<div class="dot" style="top:316px;background:#51b3bd"></div><div class="leg" style="top:312px">Venue</div>
<div class="dot" style="top:332px;background:#e99531"></div><div class="leg" style="top:328px">Seating &amp; Decor</div>
<div class="dot" style="top:348px;background:#7fc07c"></div><div class="leg" style="top:344px">Technical team</div>
<div class="dot" style="top:364px;background:#f3c74a"></div><div class="leg" style="top:360px">Performers</div>
<div class="dot" style="top:380px;background:#a94e5d"></div><div class="leg" style="top:376px">Performers' transport</div>
<div class="dot" style="top:396px;background:#9d5d51"></div><div class="leg" style="top:392px">Performers' stay</div>
<div class="dot" style="top:412px;background:#5b8b91"></div><div class="leg" style="top:408px">Marketing</div>

<!-- ===== BOTTOM BAR ===== -->
<div class="abs" style="left:0;top:768px;width:1280px;height:32px;background:#f1f1f1;border-top:1px solid #e2e2e2"></div>
<div class="abs" style="left:10px;top:782px;width:0;height:0;border-left:5px solid transparent;border-right:5px solid transparent;border-bottom:5px solid #999"></div>
<svg class="abs" style="left:31px;top:778px" width="12" height="12" viewBox="0 0 12 12"><path d="M6 1 V11 M1 6 H11" stroke="#1fa95c" stroke-width="2.2"/></svg>
<div class="abs" style="left:52px;top:769px;width:1px;height:31px;background:#d4d4d4"></div>
<div class="tab" style="left:53px;width:54px"><span style="transform:scaleX(.85)">Task</span></div>
<div class="tab" style="left:107px;width:107px;background:#fff;box-shadow:0 0 2px rgba(0,0,0,.22);-webkit-text-stroke:0.4px #222;border-right:none"><span style="transform:scaleX(.945)">Budget report</span></div>
<div class="tab" style="left:214px;width:80px"><span style="transform:scaleX(.875)">Schedule</span></div>
<div class="abs" style="left:1087px;top:768px;width:1px;height:32px;background:#d8d8d8"></div>
<div class="abs" style="left:1116px;top:768px;width:1px;height:32px;background:#d8d8d8"></div>
<div class="abs" style="left:1147px;top:768px;width:1px;height:32px;background:#d8d8d8"></div>
<div class="abs" style="left:1249px;top:768px;width:1px;height:32px;background:#d8d8d8"></div>
<svg class="abs" style="left:1093px;top:777.6px" width="18" height="16" viewBox="0 0 18 16"><rect x="1.2" y="1.6" width="15.6" height="12.8" rx="2" fill="#fff" stroke="#555" stroke-width="1.1"/><path d="M4 5.4 V4.4 H14 V5.4 M4 10.6 V11.6 H14 V10.6 M4 6.6 V9.4 M14 6.6 V9.4" fill="none" stroke="#555" stroke-width="1"/></svg>
<svg class="abs" style="left:1122px;top:779px" width="20" height="12" viewBox="0 0 20 12"><rect x="1.2" y="1.2" width="17.6" height="9.6" rx="1.6" fill="#f1f1f1" stroke="#444" stroke-width="1.5"/><g fill="#444"><rect x="3.4" y="3.2" width="1.5" height="1.5"/><rect x="5.9" y="3.2" width="1.5" height="1.5"/><rect x="8.4" y="3.2" width="1.5" height="1.5"/><rect x="10.9" y="3.2" width="1.5" height="1.5"/><rect x="13.4" y="3.2" width="1.5" height="1.5"/><rect x="15.6" y="3.2" width="1.2" height="3.8"/><rect x="3.4" y="5.6" width="1.5" height="1.5"/><rect x="5.9" y="5.6" width="1.5" height="1.5"/><rect x="8.4" y="5.6" width="1.5" height="1.5"/><rect x="10.9" y="5.6" width="1.5" height="1.5"/><rect x="13.4" y="5.6" width="1.5" height="1.5"/><rect x="4.6" y="8" width="10.8" height="1.2"/></g></svg>
<div class="abs" style="left:1155px;top:784px;width:8px;height:2px;background:#333"></div>
<div class="abs" style="left:1170px;top:774px;width:57px;height:21px;background:#fff;border:1px solid #d0d0d0;border-radius:3px"></div>
<div class="abs" style="left:1210px;top:775px;width:1px;height:19px;background:#e0e0e0"></div>
<div class="abs" style="left:1180px;top:777.5px;font-size:12px;line-height:16px;color:#111;transform-origin:0 50%;transform:scaleX(.87);-webkit-text-stroke:0.3px #111">100%</div>
<svg class="abs" style="left:1214px;top:781px" width="10" height="8" viewBox="0 0 10 8"><path d="M2 2.2 L5 5.2 L8 2.2" fill="none" stroke="#888" stroke-width="1"/></svg>
<svg class="abs" style="left:1233px;top:780px" width="10" height="10" viewBox="0 0 10 10"><path d="M5 0.8 V9.2 M0.8 5 H9.2" stroke="#333" stroke-width="1.8"/></svg>
<svg class="abs" style="left:1258px;top:778px" width="14" height="14" viewBox="0 0 14 14"><path d="M1 4.4 V1 H4.4 M9.6 1 H13 V4.4 M13 9.6 V13 H9.6 M4.4 13 H1 V9.6 M1.2 1.2 L6 6 M12.8 1.2 L8 6 M12.8 12.8 L8 8 M1.2 12.8 L6 8" fill="none" stroke="#444" stroke-width="1.15"/></svg>

</body></html>
